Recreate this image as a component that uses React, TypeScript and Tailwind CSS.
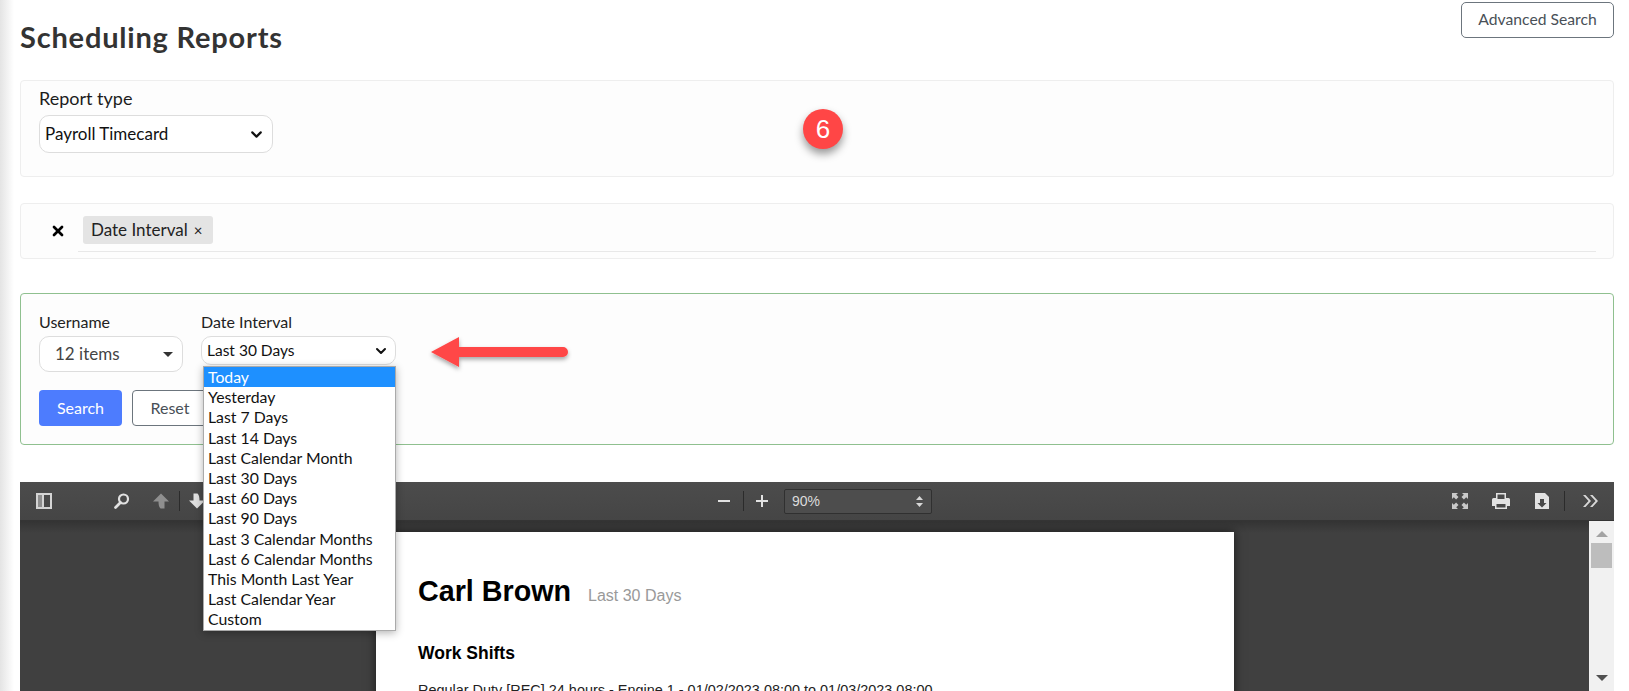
import React from "react";
import { ChevronDown, X } from "lucide-react";

const dateOptions = [
  "Today",
  "Yesterday",
  "Last 7 Days",
  "Last 14 Days",
  "Last Calendar Month",
  "Last 30 Days",
  "Last 60 Days",
  "Last 90 Days",
  "Last 3 Calendar Months",
  "Last 6 Calendar Months",
  "This Month Last Year",
  "Last Calendar Year",
  "Custom",
];

const ToolbarSeparator = () => <div className="h-[20px] w-px bg-[#2b2b2b]" />;

const Toolbar = () => (
  <div className="flex h-[39px] items-center border-b border-[#343434] bg-gradient-to-b from-[#4c4c4c] to-[#454545] text-[#d9d9d9]">
    {/* Left group */}
    <svg width="18" height="18" viewBox="0 0 18 18" className="ml-[15px]">
      <path fillRule="evenodd" fill="#d4d4d4" d="M1 1h16v16H1zM3 3v12h4V3zM9 3v12h6V3z" />
      <rect x="3" y="3" width="4" height="12" fill="#8e8e8e" />
    </svg>
    <svg width="18" height="18" viewBox="0 0 18 18" className="ml-[60px]">
      <circle cx="10.5" cy="7" r="4.5" fill="none" stroke="#e2e2e2" strokeWidth="2.2" />
      <path d="M7.5 10.5 2.5 15.5" stroke="#e2e2e2" strokeWidth="2.8" strokeLinecap="round" />
    </svg>
    <svg width="18" height="18" viewBox="0 0 18 18" className="ml-[21px]">
      <path d="M9 1.5 17 9.5h-4.5v7h-4c-1.500-1.500-2-3.500-2-7H1z" fill="#8f8f8f" />
    </svg>
    <div className="ml-[9px]">
      <ToolbarSeparator />
    </div>
    <svg width="18" height="18" viewBox="0 0 18 18" className="ml-[8px]">
      <path d="M9 16.5 1 8.500h4.500v-7h4c1.500 1.500 2 3.500 2 7H17z" fill="#e0e0e0" />
    </svg>

    {/* Zoom group */}
    <div className="ml-[512px] h-[2px] w-[12px] bg-[#e2e2e2]" />
    <div className="ml-[13px]">
      <ToolbarSeparator />
    </div>
    <svg width="14" height="14" viewBox="0 0 14 14" className="ml-[11px]">
      <path d="M6 1h2v5h5v2H8v5H6V8H1V6h5z" fill="#e2e2e2" />
    </svg>
    <div className="ml-[15px] flex h-[25px] w-[148px] items-center justify-between rounded-[2px] border border-[#303030] bg-[#4d4d4d] pl-[7px] pr-[8px] font-['Liberation_Sans',sans-serif] text-[14px] leading-none text-[#dcdcdc]">
      <span>90%</span>
      <svg width="7" height="11" viewBox="0 0 7 11">
        <path d="M3.500 0 7 4H0zM0 7h7l-3.500 4z" fill="#d8d8d8" />
      </svg>
    </div>

    {/* Right group */}
    <svg width="18" height="18" viewBox="0 0 18 18" className="ml-[519px]">
      <path
        d="M1 1h6L5.200 2.800 7.500 5.100 5.100 7.500 2.800 5.200 1 7zM17 1v6l-1.800-1.800-2.300 2.300-2.400-2.400 2.300-2.300L11 1zM1 17v-6l1.800 1.800 2.300-2.300 2.400 2.400-2.300 2.300L7 17zM17 17h-6l1.800-1.800-2.300-2.300 2.400-2.400 2.300 2.300L17 11z"
        fill="#c9c9c9"
      />
    </svg>
    <svg width="20" height="18" viewBox="0 0 20 18" className="ml-[22px]">
      <path
        fillRule="evenodd"
        d="M5 1h10v5h2.500A1.500 1.500 0 0 1 19 7.500V14h-3v3H4v-3H1V7.500A1.500 1.500 0 0 1 2.500 6H5zM6.500 2.500V7h7V2.500zM5.500 12v3.500h9V12z"
        fill="#e2e2e2"
      />
    </svg>
    <svg width="16" height="18" viewBox="0 0 16 18" className="ml-[23px]">
      <path
        fillRule="evenodd"
        d="M1 1h10l4 4v12H1zM6 7v4H3.500L8 15.500 12.500 11H10V7z"
        fill="#e2e2e2"
      />
    </svg>
    <div className="ml-[14px]">
      <ToolbarSeparator />
    </div>
    <svg width="18" height="14" viewBox="0 0 18 14" className="ml-[17px]">
      <path
        d="M1 1h2.500L9 7l-5.500 6H1l5.500-6zM8 1h2.500L16 7l-5.500 6H8l5.500-6z"
        fill="#d8d8d8"
      />
    </svg>
  </div>
);

const PdfViewer = () => (
  <div className="flex h-[210px] flex-col overflow-hidden bg-[#404040]">
    <Toolbar />
    <div className="flex flex-1 overflow-hidden">
      <div className="flex flex-1 justify-center bg-[linear-gradient(to_bottom,#333333_0,#404040_12px)]">
        <div className="mr-[-1px] mt-[11px] h-[400px] w-[858px] bg-white pl-[42px] pt-[42px] font-['Liberation_Sans',sans-serif] text-black shadow-[0_0_10px_rgba(0,0,0,0.6)]">
          <div className="flex items-baseline">
            <span className="text-[28.700px] font-bold leading-[34px]">Carl Brown</span>
            <span className="ml-[17px] text-[16px] text-[#999]">Last 30 Days</span>
          </div>
          <div className="mt-[35px] text-[17.500px] font-bold leading-[20px]">Work Shifts</div>
          <div className="mt-[18px] whitespace-nowrap text-[14.440px] leading-[18px] text-[#222]">
            Regular Duty [REC] 24 hours - Engine 1 - 01/02/2023 08:00 to 01/03/2023 08:00
          </div>
        </div>
      </div>
      <div className="flex w-[25px] flex-col items-center bg-[#f1f1f1]">
        <div className="mt-[10px] h-0 w-0 border-x-[6px] border-b-[6px] border-x-transparent border-b-[#a3a3a3]" />
        <div className="mt-[6px] h-[25px] w-[21px] bg-[#bdbdbd]" />
        <div className="mt-auto mb-[11px] h-0 w-0 border-x-[6px] border-t-[6px] border-x-transparent border-t-[#505050]" />
      </div>
    </div>
  </div>
);

const App: React.FC = () => {
  return (
    <div className="relative flex h-[691px] overflow-hidden bg-white font-['Lato',sans-serif] text-[#212121]">
      <div className="w-[14px] shrink-0 bg-gradient-to-r from-[#e4e4e4] to-white" />

      <div className="ml-[6px] mr-[15px] flex-1">
        {/* Header */}
        <div className="flex h-[80px] items-start justify-between">
          <h1 className="mt-[19px] font-['Lato',sans-serif] text-[29px] font-bold leading-[36px] tracking-[0.8px] text-[#333]">
            Scheduling Reports
          </h1>
          <button className="mt-[2px] h-[36px] w-[153px] rounded-[5px] border border-[#6c757d] text-[15.700px] text-[#495057]">
            Advanced Search
          </button>
        </div>

        {/* Report type */}
        <div className="relative h-[97px] rounded-[4px] border border-[#eee] bg-[#fdfdfd] pl-[18px] pt-[6px]">
          <div className="text-[18px] leading-[22px] text-[#1c1c1c]">Report type</div>
          <div className="mt-[6px] flex h-[38px] w-[234px] items-center justify-between rounded-[10px] border border-[#ddd] bg-white pl-[5px] pr-[7px] text-[17px] text-[#111]">
            <span>Payroll Timecard</span>
            <ChevronDown size={17} strokeWidth={3} color="#111" />
          </div>
          {/* Step marker */}
          <div className="absolute left-[782px] top-[28px] flex h-[40px] w-[40px] items-center justify-center rounded-full bg-[#ff4646] font-['Liberation_Sans',sans-serif] text-[26px] text-white shadow-[0_5px_8px_rgba(0,0,0,0.4)]">
            6
          </div>
        </div>

        {/* Active filters */}
        <div className="mt-[26px] flex h-[56px] rounded-[4px] border border-[#eee] bg-[#fdfdfd] pl-[29px] pt-[12px]">
          <X size={16} strokeWidth={4} color="#000" className="mt-[7px]" />
          <div className="ml-[17px] mr-[17px] flex-1 self-stretch">
            <div className="-ml-[5px] h-[36px] border-b border-[#e8e8e8] pl-[5px]">
              <div className="inline-flex h-[28px] w-[130px] items-center rounded-[3px] bg-[#e4e4e4] pl-[8px] text-[17px] text-[#222]">
                Date Interval
                <span className="ml-[6px] text-[15px] leading-none">×</span>
              </div>
            </div>
          </div>
        </div>

        {/* Search form */}
        <div className="mt-[34px] h-[152px] rounded-[4px] border border-[#8fc08f] bg-[#fdfdfd] pl-[18px] pt-[18px]">
          <div className="flex">
            <div className="w-[162px]">
              <div className="text-[16px] leading-[20px] text-[#222]">Username</div>
              <div className="mt-[4px] flex h-[36px] w-[144px] items-center justify-between rounded-[10px] border border-[#ddd] bg-white pl-[15px] pr-[9px] text-[17px] text-[#444]">
                <span>12 items</span>
                <div className="h-0 w-0 border-x-[5px] border-t-[5px] border-x-transparent border-t-[#333]" />
              </div>
            </div>
            <div className="relative">
              <div className="text-[16px] leading-[20px] text-[#222]">Date Interval</div>
              <div className="mt-[4px] flex h-[29px] w-[195px] items-center justify-between rounded-[10px] border border-[#ddd] bg-white pl-[5px] pr-[6px] text-[15.500px] text-[#111]">
                <span>Last 30 Days</span>
                <ChevronDown size={16} strokeWidth={3} color="#111" />
              </div>
              {/* Open dropdown */}
              <div className="absolute left-[2px] top-[54px] z-10 w-[193px] border border-[#aaa] bg-white pb-[1px] text-[15.800px] shadow-[0_2px_8px_rgba(0,0,0,0.3)]">
                {dateOptions.map((option, i) => (
                  <div
                    key={option}
                    className={
                      i === 0
                        ? "h-[20.200px] whitespace-nowrap bg-[#1e90ff] pl-[4px] leading-[20px] text-white"
                        : "h-[20.200px] whitespace-nowrap pl-[4px] leading-[20px] text-[#111]"
                    }
                  >
                    {option}
                  </div>
                ))}
              </div>
            </div>
            {/* Pointer arrow */}
            <svg width="144" height="44" viewBox="0 0 144 44" className="absolute left-[428px] top-[332px]">
              <defs>
                <filter id="arrowShadow" x="-10%" y="-30%" width="120%" height="180%">
                  <feDropShadow dx="0" dy="2.500" stdDeviation="2" floodColor="#000" floodOpacity="0.35" />
                </filter>
              </defs>
              <path
                d="M3 20 31 5v10h104a5 5 0 0 1 0 10H31v10z"
                fill="#ff4646"
                filter="url(#arrowShadow)"
              />
            </svg>
          </div>
          <div className="mt-[18px] flex gap-[10px]">
            <button className="h-[36px] w-[83px] rounded-[4px] bg-[#4d7cfe] text-[16px] text-white">Search</button>
            <button className="h-[36px] w-[76px] rounded-[4px] border border-[#6c757d] bg-white text-[16px] text-[#495057]">
              Reset
            </button>
          </div>
        </div>

        <div className="mt-[37px]">
          <PdfViewer />
        </div>
      </div>
    </div>
  );
};

export default App;
